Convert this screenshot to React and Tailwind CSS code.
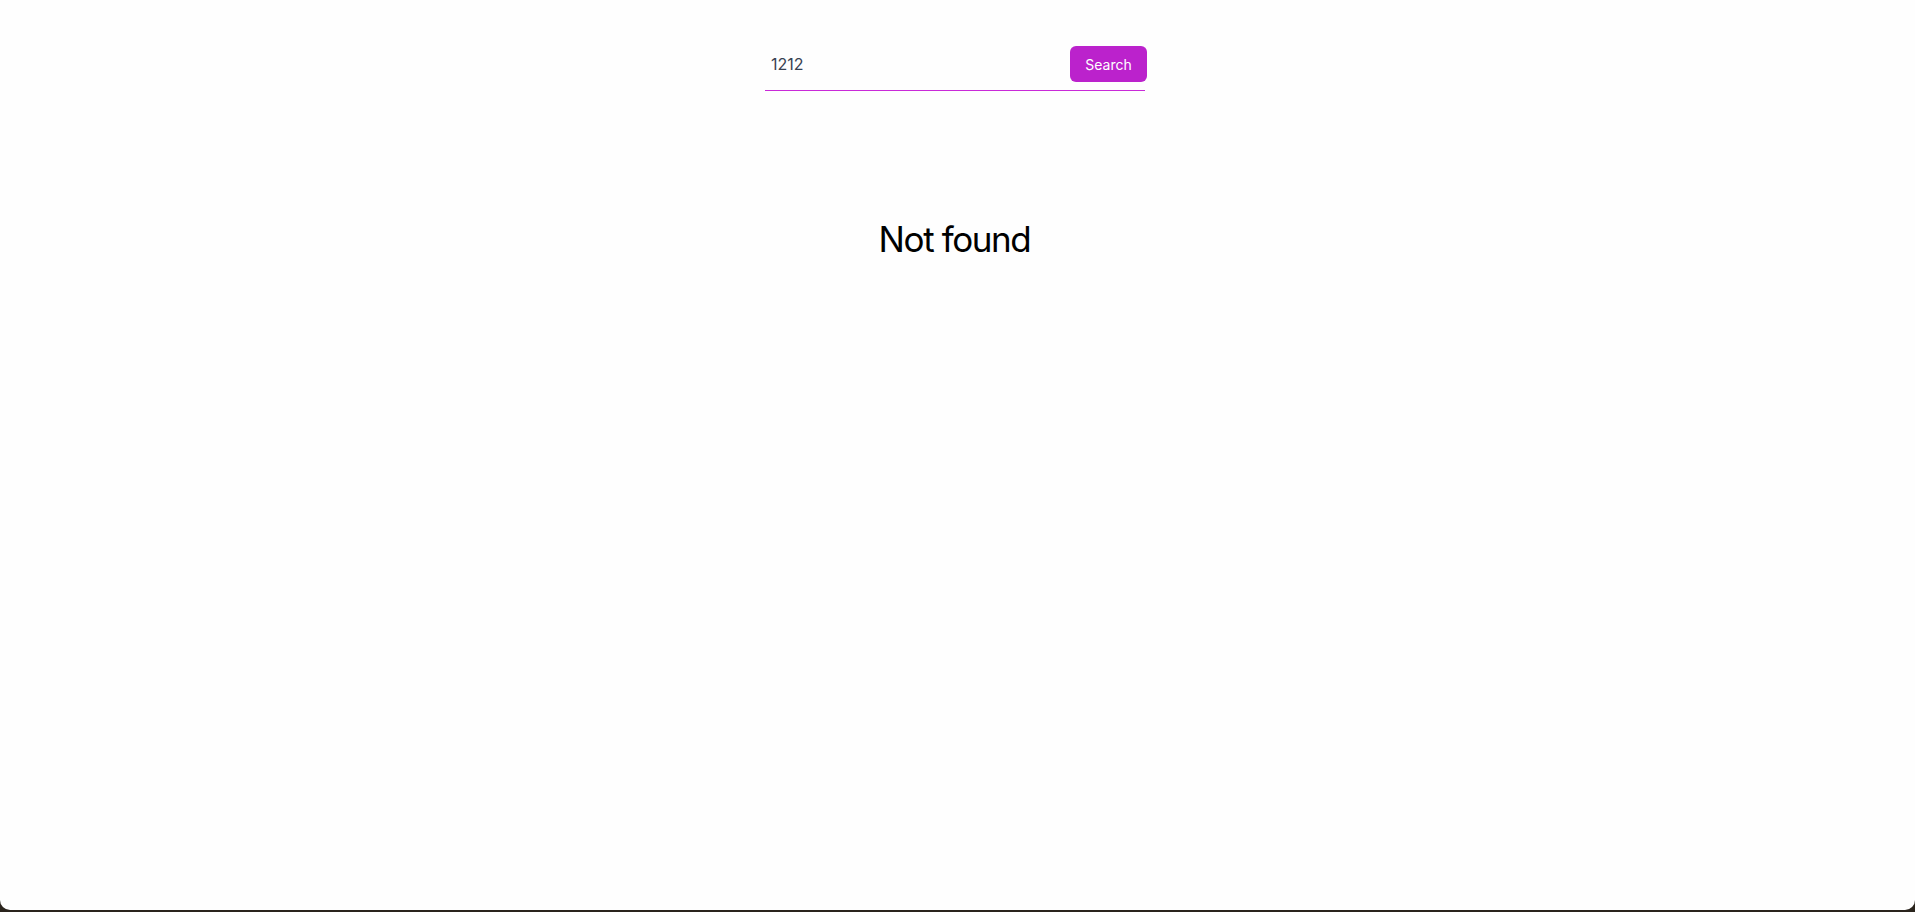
import { useState } from "react";

export default function App() {
  const [query, setQuery] = useState("1212");

  return (
    <div className="h-[912px] w-full bg-[#2a241d] overflow-hidden" style={{ fontFamily: "Inter, 'Noto Sans', sans-serif" }}>
      <div className="h-[910px] w-full bg-[#fefefe] rounded-b-[10px] flex flex-col items-center">
        {/* Search bar */}
        <form
          className="mt-[38px] w-[380px] ml-[-5px] h-[53px] flex items-center border-b-[1.5px] border-[#c92ad8]"
          onSubmit={(e) => e.preventDefault()}
        >
          <input
            value={query}
            onChange={(e) => setQuery(e.target.value)}
            className="flex-1 min-w-0 h-full pl-[6px] bg-transparent text-[16px] text-[#374151] outline-none"
          />
          <button
            type="submit"
            className="h-9 w-[77px] -mr-[2px] rounded-md bg-[#bb22cc] text-white text-[14px] cursor-pointer"
          >
            Search
          </button>
        </form>

        {/* Result */}
        <h2 className="mt-[128px] ml-[-6px] text-[35px] leading-[40px] text-black tracking-[-0.04em]">Not found</h2>
      </div>
    </div>
  );
}
